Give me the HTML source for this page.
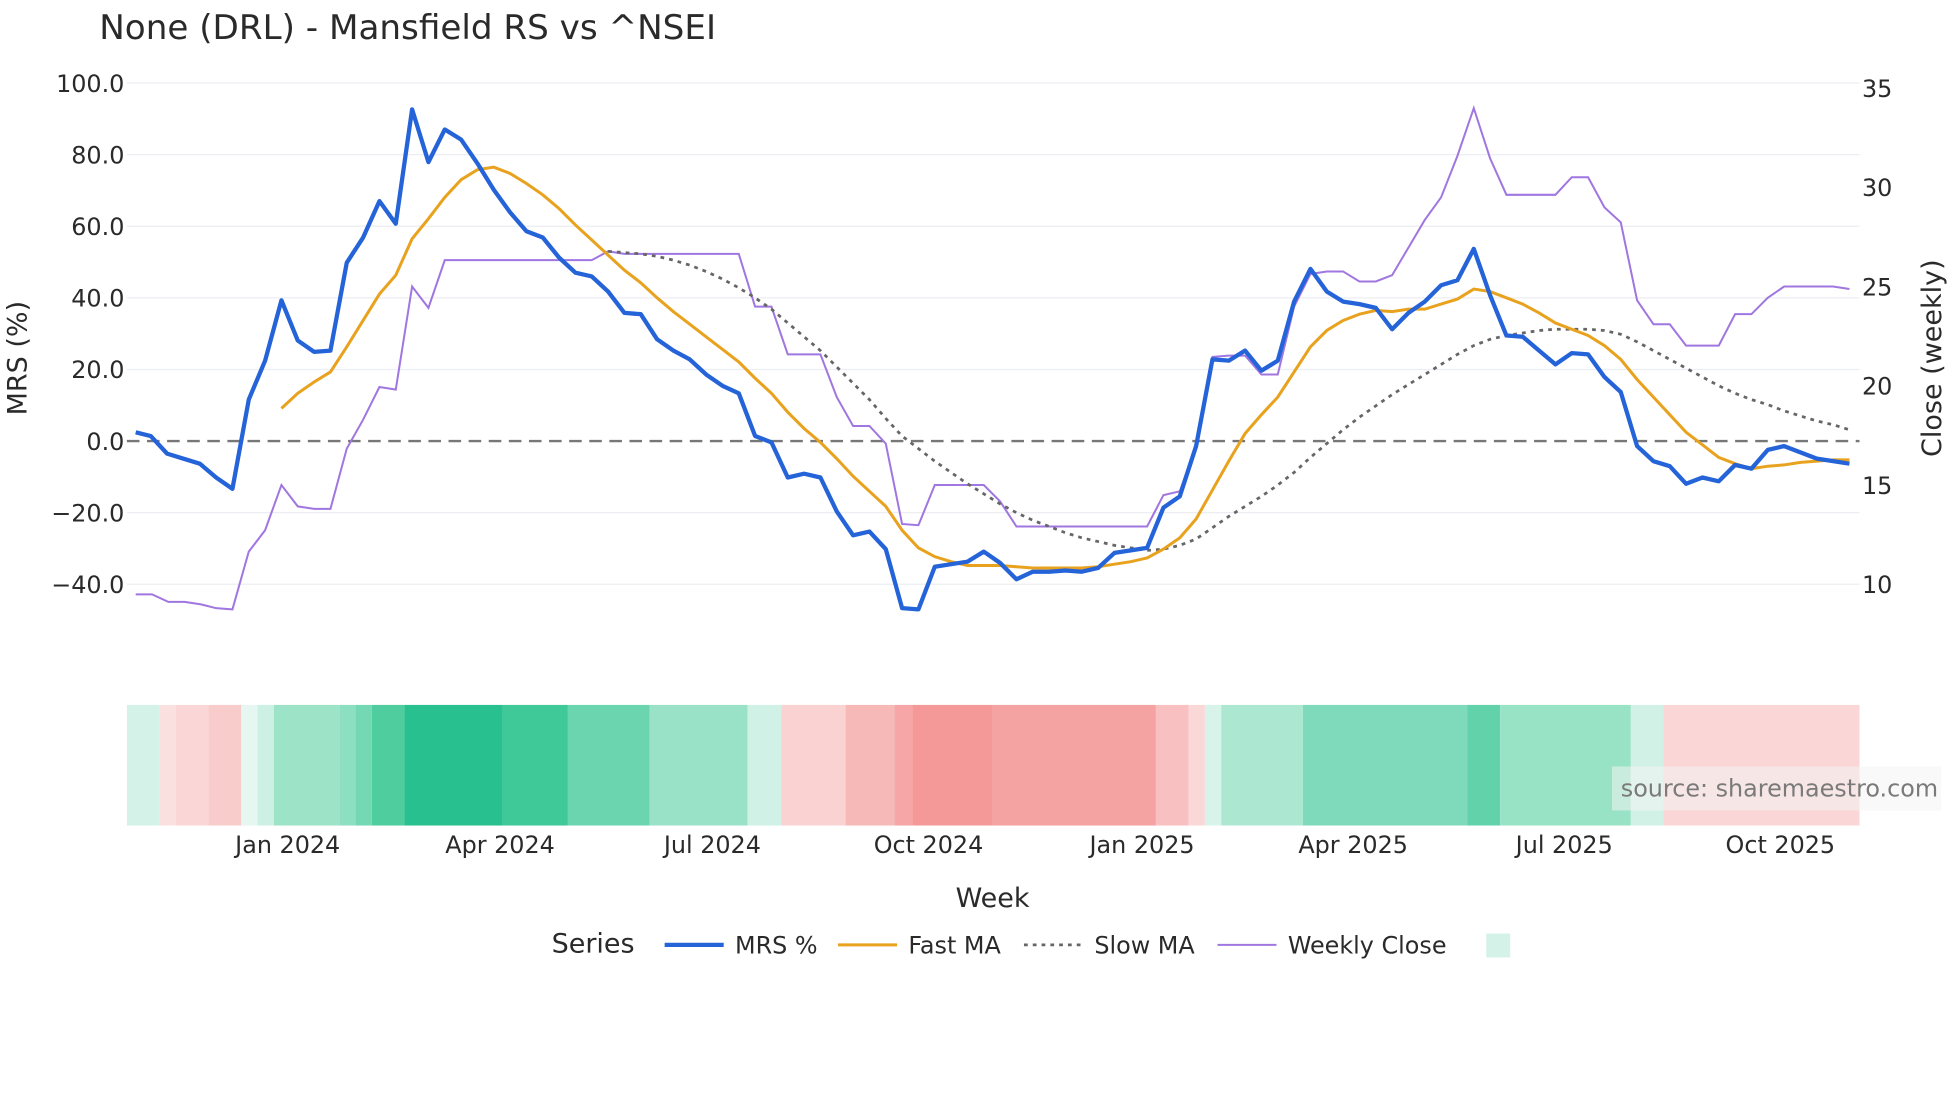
<!DOCTYPE html>
<html><head><meta charset="utf-8"><style>
html,body{margin:0;padding:0;background:#fff;width:1960px;height:1102px;overflow:hidden}
svg{display:block}
text{font-family:"DejaVu Sans","Liberation Sans",sans-serif;fill:#2a2a2a}
</style></head><body>
<svg width="1960" height="1102" viewBox="0 0 1560 877" xmlns="http://www.w3.org/2000/svg">
<rect width="1560" height="877" fill="#fff"/>
<text x="79" y="31" font-size="27.2">None (DRL) - Mansfield RS vs ^NSEI</text>
<g stroke="#eceef2" stroke-width="1">
<line x1="101" x2="1480" y1="66" y2="66"/><line x1="101" x2="1480" y1="123" y2="123"/>
<line x1="101" x2="1480" y1="180" y2="180"/><line x1="101" x2="1480" y1="237" y2="237"/>
<line x1="101" x2="1480" y1="294" y2="294"/><line x1="101" x2="1480" y1="408" y2="408"/>
<line x1="101" x2="1480" y1="465" y2="465"/>
</g>
<g font-size="19" text-anchor="end">
<text x="99" y="73">100.0</text><text x="99" y="130">80.0</text><text x="99" y="187">60.0</text>
<text x="99" y="244">40.0</text><text x="99" y="301">20.0</text><text x="99" y="358">0.0</text>
<text x="99" y="415">−20.0</text><text x="99" y="472">−40.0</text>
</g>
<g font-size="19">
<text x="1482" y="77">35</text><text x="1482" y="156">30</text><text x="1482" y="235">25</text>
<text x="1482" y="314">20</text><text x="1482" y="393">15</text><text x="1482" y="472">10</text>
</g>
<text transform="translate(21,285) rotate(-90)" font-size="21.5" text-anchor="middle">MRS (%)</text>
<text transform="translate(1545,285) rotate(-90)" font-size="21.5" text-anchor="middle">Close (weekly)</text>
<line x1="101" x2="1480" y1="351" y2="351" stroke="#777" stroke-width="1.8" stroke-dasharray="10,6"/>
<polyline fill="none" stroke="#a076e0" stroke-width="1.6" points="108,473 121,473 134,479 147,479 160,481 172,484 185,485 198,439 211,422 224,386 237,403 250,405 263,405 276,357 289,334 302,308 315,310 328,228 341,245 354,207 367,207 471,207 484,200 497,202 588,202 601,244 614,244 627,282 640,282 653,282 666,316 679,339 692,339 705,353 718,417 731,418 744,386 757,386 783,386 796,399 809,419 913,419 926,394 939,391 952,355 965,284 978,283 991,283 1004,298 1017,298 1030,244 1043,218 1056,216 1069,216 1082,224 1095,224 1108,219 1121,197 1134,175 1147,157 1160,124 1173,86 1186,126 1199,155 1238,155 1251,141 1264,141 1277,165 1290,177 1303,239 1316,258 1329,258 1342,275 1368,275 1381,250 1394,250 1407,237 1420,228 1459,228 1472,230"/>
<polyline fill="none" stroke="#666" stroke-width="2.2" stroke-dasharray="3,4" points="484,200 497,201 510,202 523,204 536,207 549,211 562,216 575,222 588,229 601,237 614,246 627,257 640,268 653,279 666,292 679,305 692,318 705,333 718,347 731,357 744,367 757,376 770,385 783,393 796,401 809,408 822,414 835,419 848,424 861,428 874,431 887,434 900,436 913,438 926,437 939,434 952,429 965,420 978,411 991,403 1004,395 1017,386 1030,376 1043,364 1056,353 1069,342 1082,332 1095,323 1108,314 1121,306 1134,298 1147,290 1160,282 1173,275 1186,270 1199,267 1212,265 1225,263 1238,262 1251,262 1264,262 1277,263 1290,266 1303,272 1316,279 1329,286 1342,293 1355,300 1368,307 1381,313 1394,318 1407,322 1420,327 1433,331 1446,335 1459,338 1472,342"/>
<polyline fill="none" stroke="#e8a21e" stroke-width="2.4" points="224,325 237,313 250,304 263,296 276,276 289,255 302,234 315,219 328,190 341,174 354,157 367,143 380,135 393,133 406,138 419,146 432,155 445,166 458,179 471,191 484,203 497,215 510,225 523,237 536,248 549,258 562,268 575,278 588,288 601,301 614,313 627,328 640,341 653,352 666,365 679,379 692,391 705,403 718,422 731,436 744,443 757,447 770,450 783,450 796,450 809,451 822,452 835,452 848,452 861,452 874,451 887,449 900,447 913,444 926,437 939,428 952,413 965,390 978,367 991,345 1004,330 1017,316 1030,296 1043,276 1056,263 1069,255 1082,250 1095,247 1108,248 1121,246 1134,246 1147,242 1160,238 1173,230 1186,232 1199,237 1212,242 1225,249 1238,257 1251,262 1264,267 1277,275 1290,286 1303,302 1316,316 1329,330 1342,344 1355,354 1368,364 1381,369 1394,373 1407,371 1420,370 1433,368 1446,367 1459,366 1472,366"/>
<polyline fill="none" stroke="#2563d9" stroke-width="3.4" stroke-linejoin="round" points="108,344 120,347 133,361 146,365 159,369 172,380 185,389 198,318 211,287 224,239 237,271 250,280 263,279 276,209 289,189 302,160 315,178 328,87 341,129 354,103 367,111 380,130 393,151 406,169 419,184 432,189 445,205 458,217 471,220 484,232 497,249 510,250 523,270 536,279 549,286 562,298 575,307 588,313 601,347 614,352 627,380 640,377 653,380 666,407 679,426 692,423 705,437 718,484 731,485 744,451 757,449 770,447 783,439 796,448 809,461 822,455 835,455 848,454 861,455 874,452 887,440 900,438 913,436 926,404 939,395 952,355 965,286 978,287 991,279 1004,295 1017,287 1030,240 1043,214 1056,232 1069,240 1082,242 1095,245 1108,262 1121,249 1134,240 1147,227 1160,223 1173,198 1186,235 1199,267 1212,268 1225,279 1238,290 1251,281 1264,282 1277,300 1290,312 1303,355 1316,367 1329,371 1342,385 1355,380 1368,383 1381,370 1394,373 1407,358 1420,355 1433,360 1446,365 1459,367 1472,369"/>
<g>
<rect x="101" y="561" width="26" height="96" fill="#d4f2e8"/>
<rect x="127" y="561" width="13" height="96" fill="#fbe0e0"/>
<rect x="140" y="561" width="26" height="96" fill="#fad6d6"/>
<rect x="166" y="561" width="26" height="96" fill="#f9cccc"/>
<rect x="192" y="561" width="13" height="96" fill="#e5f7f0"/>
<rect x="205" y="561" width="13" height="96" fill="#cdf0e4"/>
<rect x="218" y="561" width="52" height="96" fill="#9de3c8"/>
<rect x="270" y="561" width="13" height="96" fill="#8ddfc2"/>
<rect x="283" y="561" width="13" height="96" fill="#74d8b5"/>
<rect x="296" y="561" width="26" height="96" fill="#4fcd9f"/>
<rect x="322" y="561" width="78" height="96" fill="#28c08e"/>
<rect x="400" y="561" width="52" height="96" fill="#3fc898"/>
<rect x="452" y="561" width="65" height="96" fill="#6bd5b0"/>
<rect x="517" y="561" width="78" height="96" fill="#9ae2c7"/>
<rect x="595" y="561" width="27" height="96" fill="#d0f1e6"/>
<rect x="622" y="561" width="51" height="96" fill="#fad2d2"/>
<rect x="673" y="561" width="39" height="96" fill="#f7b8b8"/>
<rect x="712" y="561" width="14" height="96" fill="#f6a6a6"/>
<rect x="726" y="561" width="64" height="96" fill="#f59898"/>
<rect x="790" y="561" width="130" height="96" fill="#f4a2a2"/>
<rect x="920" y="561" width="26" height="96" fill="#f8c0c0"/>
<rect x="946" y="561" width="13" height="96" fill="#fbd8d8"/>
<rect x="959" y="561" width="13" height="96" fill="#d8f4ea"/>
<rect x="972" y="561" width="65" height="96" fill="#ace7d1"/>
<rect x="1037" y="561" width="131" height="96" fill="#7edabb"/>
<rect x="1168" y="561" width="26" height="96" fill="#62d2ab"/>
<rect x="1194" y="561" width="104" height="96" fill="#98e2c6"/>
<rect x="1298" y="561" width="26" height="96" fill="#d2f1e6"/>
<rect x="1324" y="561" width="156" height="96" fill="#fbd6d6"/>
</g>
<rect x="1283" y="610" width="262" height="35" fill="#f4f4f4" opacity="0.55"/>
<text x="1290" y="634" font-size="19" style="fill:#7a7a7a">source: sharemaestro.com</text>
<g font-size="19" text-anchor="middle">
<text x="229" y="679">Jan 2024</text><text x="398" y="679">Apr 2024</text><text x="567" y="679">Jul 2024</text>
<text x="739" y="679">Oct 2024</text><text x="909" y="679">Jan 2025</text><text x="1077" y="679">Apr 2025</text>
<text x="1245" y="679">Jul 2025</text><text x="1417" y="679">Oct 2025</text>
</g>
<text x="790" y="722" font-size="21.5" text-anchor="middle">Week</text>
<text x="439" y="758" font-size="21.5">Series</text>
<line x1="529" x2="576" y1="752" y2="752" stroke="#2563d9" stroke-width="3.4"/>
<text x="585" y="759" font-size="19">MRS %</text>
<line x1="667" x2="714" y1="752" y2="752" stroke="#e8a21e" stroke-width="2.4"/>
<text x="723" y="759" font-size="19">Fast MA</text>
<line x1="815" x2="862" y1="752" y2="752" stroke="#666" stroke-width="2.2" stroke-dasharray="3,4"/>
<text x="871" y="759" font-size="19">Slow MA</text>
<line x1="969" x2="1016" y1="752" y2="752" stroke="#a076e0" stroke-width="1.6"/>
<text x="1025" y="759" font-size="19">Weekly Close</text>
<rect x="1183" y="743" width="19" height="19" fill="#d4f2e8"/>
</svg>
</body></html>
